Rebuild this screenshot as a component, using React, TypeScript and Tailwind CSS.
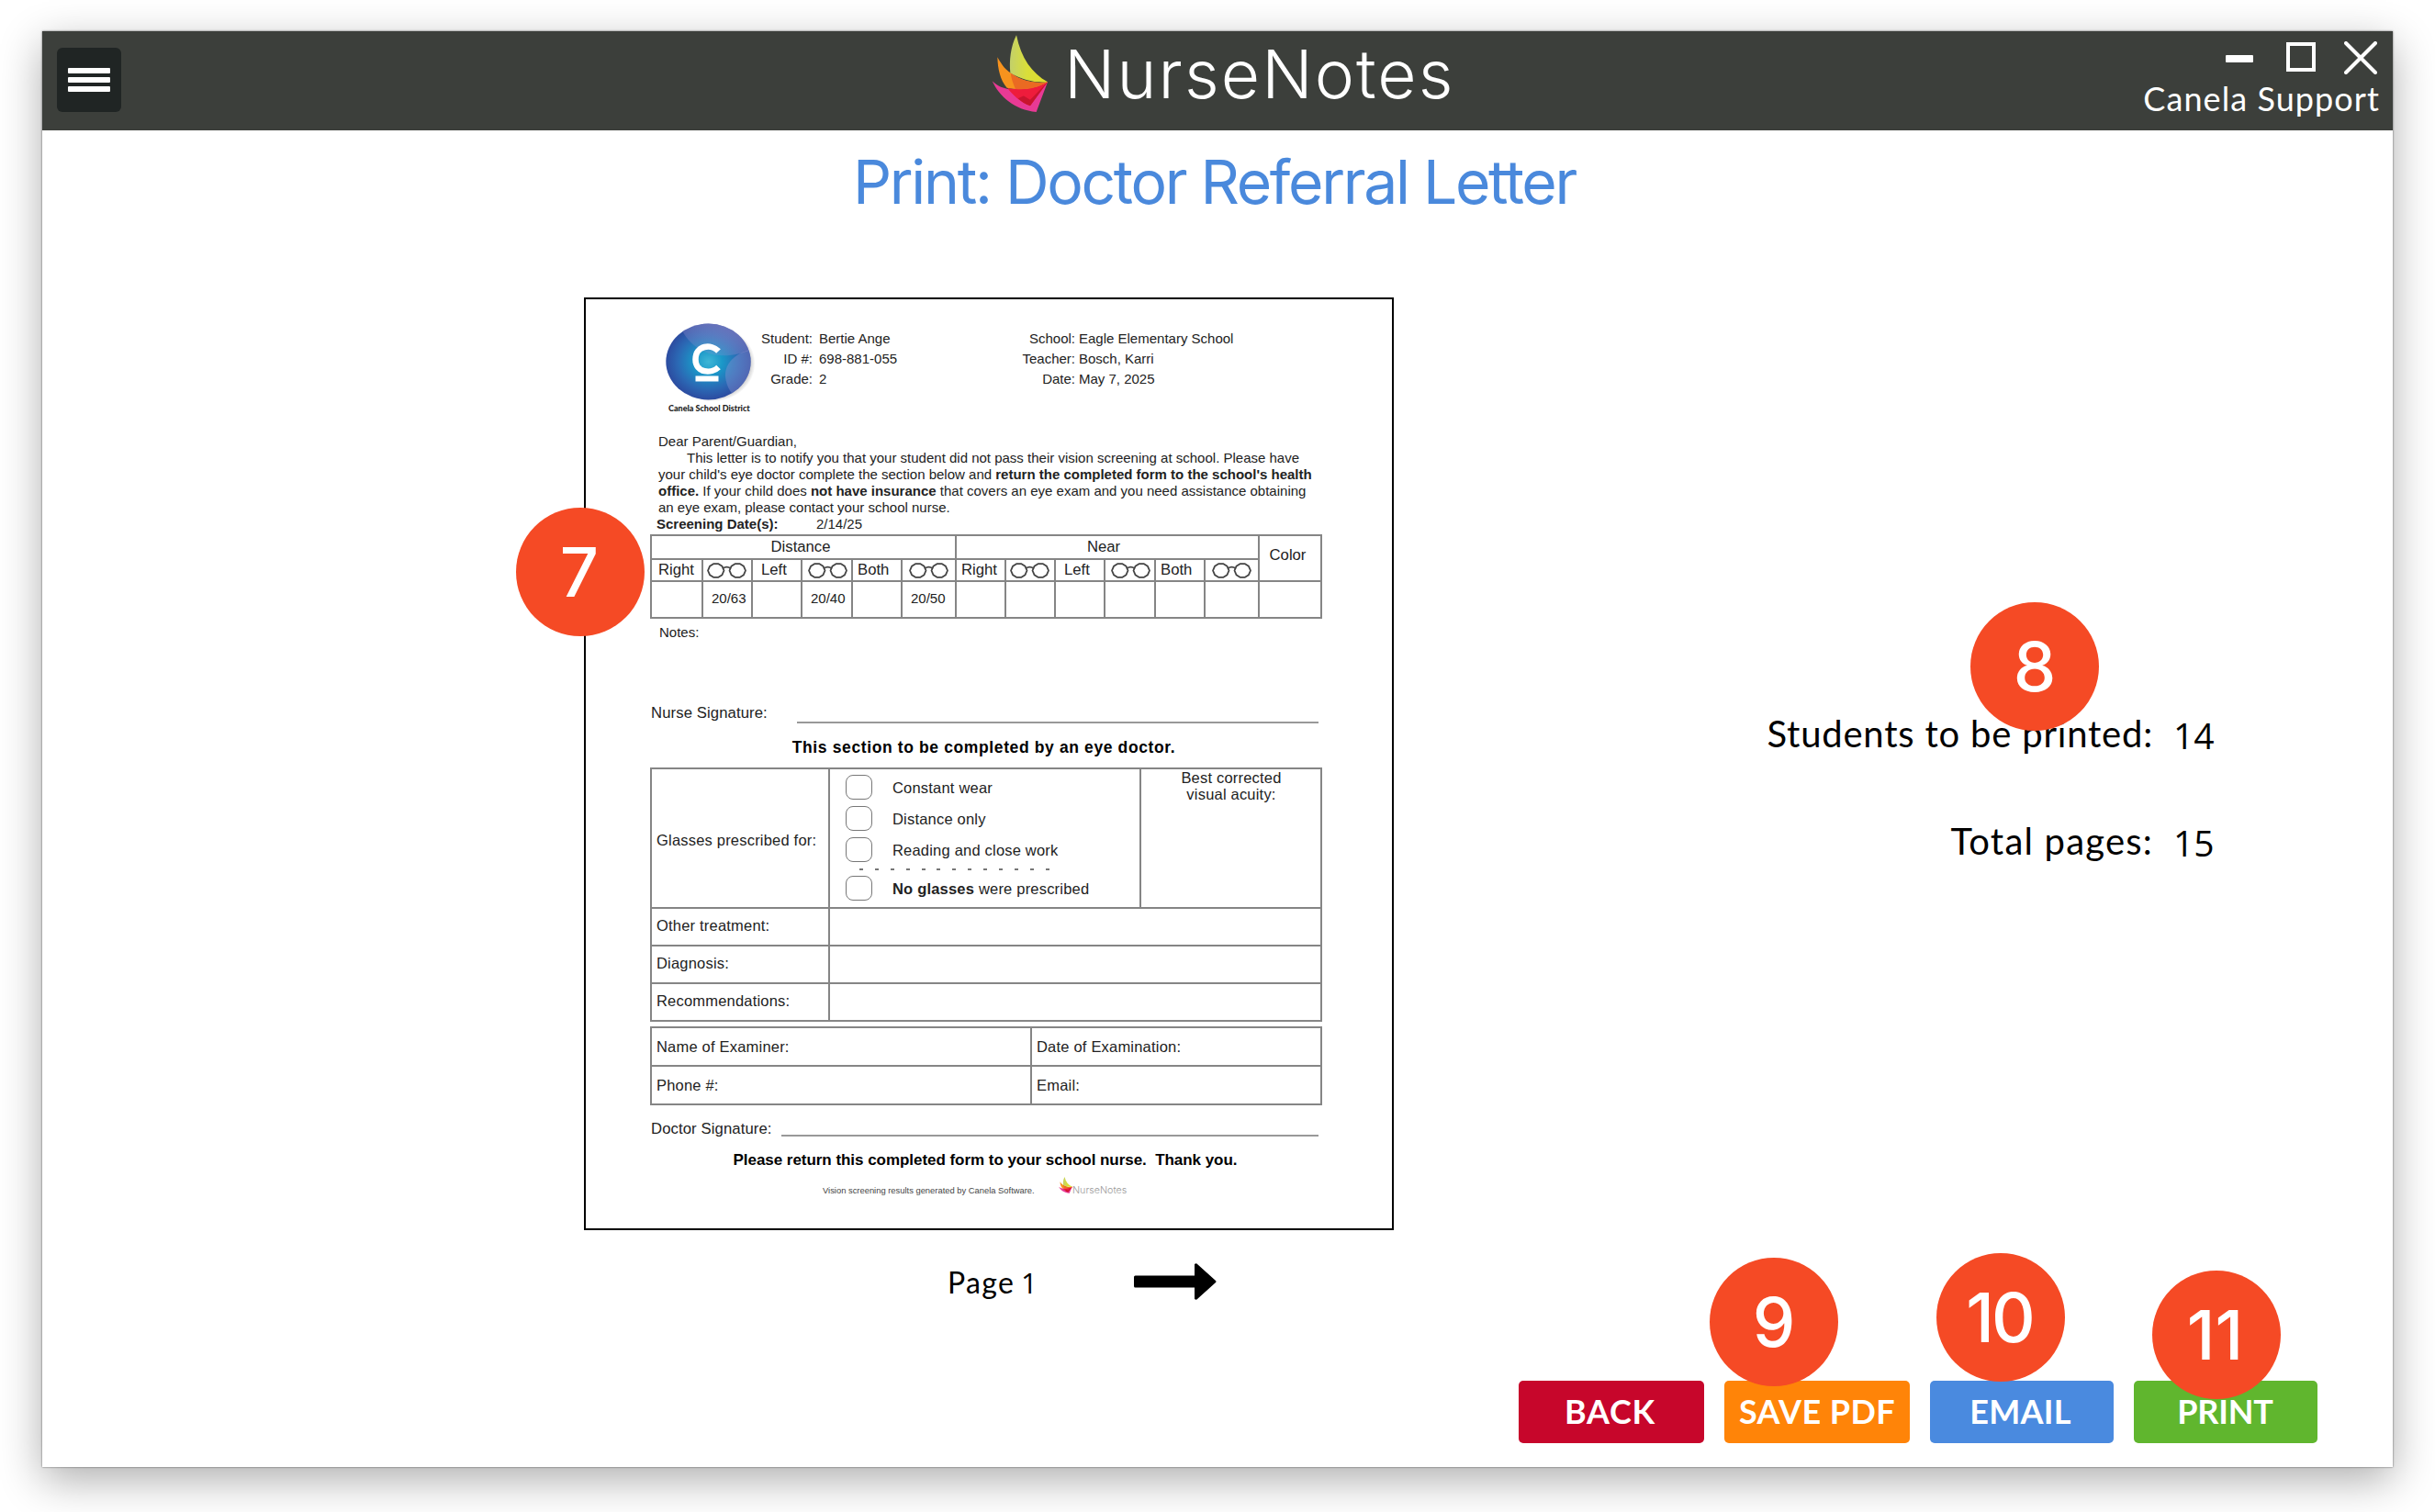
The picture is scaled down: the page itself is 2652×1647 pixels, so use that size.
import React from 'react';
import clsx from 'clsx';

const LINE = 'border-[#858585]';

function Flame({ className, id }: { className: string; id: string }) {
  return (
    <svg viewBox="60 24 186 255" preserveAspectRatio="none" className={className} aria-hidden="true">
      <defs>
        <linearGradient id={id} x1="0" x2="1" y1="0" y2="0">
          <stop offset="0" stopColor="#c3d06a" />
          <stop offset="0.45" stopColor="#d9de3a" />
          <stop offset="1" stopColor="#e0dc2c" />
        </linearGradient>
      </defs>
      <path d="M62 175C80 192 100 200 120 202L243 178L206 276C135 270 85 225 62 175Z" fill="#e83a95" />
      <path d="M112 198C160 206 205 198 243 178L186 256C155 244 130 222 112 198Z" fill="#ee1c3c" />
      <path d="M146 232L184 214L243 178L186 256C170 250 158 243 146 232Z" fill="#c8142e" />
      <path d="M141 205C175 206 210 198 243 178L186 236C170 228 152 216 141 205Z" fill="#ee1c3c" />
      <path d="M79 97C95 126 108 140 122 148C160 178 205 184 243 178C205 200 160 206 110 197C88 172 80 135 79 97Z" fill="#f7931e" />
      <path d="M122 148C160 178 205 184 243 178C210 198 175 204 138 201C130 184 124 166 122 148Z" fill="#ea6a22" />
      <path d="M141 25C156 100 192 150 243 178C205 182 160 172 121 148C117 108 122 62 141 25Z" fill={`url(#${id})`} />
    </svg>
  );
}

function Glasses() {
  return (
    <svg viewBox="0 0 43 17" className="h-[17px] w-[43px]" fill="none" stroke="#444" strokeWidth="1.8" strokeLinejoin="round">
      <path d="M7 1.2H12.500L16.500 3.800L18.500 8.500L16.500 13.200L12.500 15.800H7L3 13.200L1 8.500L3 3.800Z" />
      <path d="M30.500 1.2H36L40 3.800L42 8.500L40 13.200L36 15.800H30.500L26.500 13.200L24.500 8.500L26.500 3.800Z" />
      <path d="M17.300 6Q21.500 3.200 25.700 6" />
    </svg>
  );
}

function DistrictSeal() {
  return (
    <svg viewBox="0 0 100 86" className="h-[86px] w-[100px]" aria-hidden="true">
      <defs>
        <radialGradient id="seal" cx="0.5" cy="0.5" r="0.52">
          <stop offset="0" stopColor="#3fb6d6" />
          <stop offset="0.32" stopColor="#1a97c8" />
          <stop offset="0.7" stopColor="#2b68b4" />
          <stop offset="1" stopColor="#2c479d" />
        </radialGradient>
        <radialGradient id="sealShade" cx="0.5" cy="0.5" r="0.5">
          <stop offset="0.85" stopColor="#9a9a9a" stopOpacity="0.6" />
          <stop offset="1" stopColor="#9a9a9a" stopOpacity="0" />
        </radialGradient>
        <linearGradient id="sealGloss" x1="1" x2="0.2" y1="0" y2="1">
          <stop offset="0" stopColor="#9a94d2" stopOpacity="0.7" />
          <stop offset="1" stopColor="#9a94d2" stopOpacity="0.15" />
        </linearGradient>
        <clipPath id="sealClip">
          <ellipse cx="46.5" cy="42" rx="46.2" ry="41.4" />
        </clipPath>
      </defs>
      <ellipse cx="50.5" cy="44" rx="47" ry="41.5" fill="url(#sealShade)" />
      <ellipse cx="46.5" cy="42" rx="46.2" ry="41.4" fill="url(#seal)" />
      <g clipPath="url(#sealClip)">
        <path d="M18 8C26 24 42 34 58 35C72 36 84 33 95 28V-2H18Z" fill="url(#sealGloss)" />
        <path d="M95 28C76 32 64 44 65 58C66 70 72 78 80 84L98 60Z" fill="#8a94d2" fillOpacity="0.4" />
      </g>
      <path d="M57.500 30.500C50 22.500 32.500 23.500 32.500 39.500C32.500 54.500 50 55.500 57.500 48" fill="none" stroke="#fff" strokeWidth="6.500" />
      <rect x="32.500" y="57.500" width="25" height="6" fill="#fff" />
    </svg>
  );
}

function InfoTable({ rows, className }: { rows: [string, string][]; className: string }) {
  return (
    <dl className={clsx('grid content-start text-[15px] leading-[22px]', className)}>
      {rows.map(([label, value]) => (
        <React.Fragment key={label}>
          <dt className="text-right">{label}</dt>
          <dd>{value}</dd>
        </React.Fragment>
      ))}
    </dl>
  );
}

function Cell({ className, children }: { className?: string; children?: React.ReactNode }) {
  return <div className={clsx('flex items-center border-l-2 border-t-2', LINE, className)}>{children}</div>;
}

function AcuityHeads({ first }: { first: string }) {
  return (
    <>
      <Cell className={first}>Right</Cell>
      <Cell className="pl-[4px]"><Glasses /></Cell>
      <Cell className="pl-[9px]">Left</Cell>
      <Cell className="pl-[6px]"><Glasses /></Cell>
      <Cell className="pl-[5px]">Both</Cell>
      <Cell className="pl-[7px]"><Glasses /></Cell>
    </>
  );
}

// One entry per column: six for distance, six for near, one for color.
const RESULTS = ['', '20/63', '', '20/40', '', '20/50', '', '', '', '', '', '', ''];

function AcuityTable() {
  return (
    <div className={clsx('grid w-[732px] grid-cols-[56px_54px_54px_55px_54px_59px_54px_54px_54px_55px_54px_59px_68px] grid-rows-[26px_24px_40px] border-b-2 border-r-2 text-[16.7px] leading-none', LINE)}>
      <Cell className="col-span-6 justify-center pr-[6px]">Distance</Cell>
      <Cell className="col-span-6 justify-center pr-[8px]">Near</Cell>
      <Cell className="col-start-13 row-span-2 justify-center pb-[6px] pr-[5px]">Color</Cell>
      <AcuityHeads first="pl-[7px]" />
      <AcuityHeads first="pl-[5px]" />
      {RESULTS.map((value, i) => (
        <Cell key={i} className="pb-[4px] pl-[9px] text-[15px]">{value}</Cell>
      ))}
    </div>
  );
}

function Option({ className, children }: { className?: string; children: React.ReactNode }) {
  return (
    <div className={clsx('flex h-[27px] items-center gap-[22px]', className)}>
      <span className="h-[27px] w-[29px] rounded-[8px] border-[1.5px] border-[#777]" />
      <span className="whitespace-nowrap pt-[2px]">{children}</span>
    </div>
  );
}

function SignatureLine({ label, gap }: { label: string; gap: string }) {
  return (
    <div className="flex w-[728px] items-stretch">
      <span className="pl-px pt-px tracking-[0.1px]">{label}</span>
      <span className={clsx('flex-1 border-b-2 border-[#999]', gap)} />
    </div>
  );
}

function Letter() {
  return (
    <article className="flex h-[1016px] w-[882px] flex-col border-2 border-black bg-white pl-[70px] font-['Liberation_Sans',sans-serif] text-[#222]">
      <header className="flex h-[146px] pt-[26px]">
        <div className="ml-[17px] flex w-[100px] flex-col">
          <DistrictSeal />
          <p className="ml-[3px] mt-[1px] whitespace-nowrap font-['Lato',sans-serif] text-[9px] font-black leading-[11px] text-[#222]">Canela School District</p>
        </div>
        <InfoTable
          className="w-[285px] grid-cols-[60px_1fr] gap-x-[7px] pt-[6px]"
          rows={[['Student:', 'Bertie Ange'], ['ID #:', '698-881-055'], ['Grade:', '2']]}
        />
        <InfoTable
          className="w-[320px] grid-cols-[61px_1fr] gap-x-[4px] pt-[6px]"
          rows={[['School:', 'Eagle Elementary School'], ['Teacher:', 'Bosch, Karri'], ['Date:', 'May 7, 2025']]}
        />
      </header>

      <div className="h-[110px] whitespace-nowrap pl-[9px] text-[15px] leading-[17.9px]">
        <p>Dear Parent/Guardian,</p>
        <p className="pl-[31px]">This letter is to notify you that your student did not pass their vision screening at school. Please have</p>
        <p>your child's eye doctor complete the section below and <b>return the completed form to the school's health</b></p>
        <p><b>office.</b> If your child does <b>not have insurance</b> that covers an eye exam and you need assistance obtaining</p>
        <p>an eye exam, please contact your school nurse.</p>
        <p className="-ml-[2px] flex"><b className="w-[174px]">Screening Date(s):</b>2/14/25</p>
      </div>

      <AcuityTable />
      <p className="h-[92px] pl-[10px] text-[15px] leading-[30px]">Notes:</p>

      <div className="flex h-[22px] text-[16.7px] leading-[20px]">
        <SignatureLine label="Nurse Signature:" gap="ml-[32px]" />
      </div>
      <h2 className="mt-4 w-[727px] whitespace-nowrap text-center text-[17.5px] font-bold leading-[20px] tracking-[0.62px] text-black">This section to be completed by an eye doctor.</h2>

      <div className={clsx('mt-3 grid w-[732px] grid-cols-[194px_339px_197px] grid-rows-[152px_41px_41px_41px] border-b-2 border-r-2 text-[16.5px] leading-[17.7px] tracking-[0.2px]', LINE)}>
        <Cell className="whitespace-nowrap pl-[5px] pt-[5px]">Glasses prescribed for:</Cell>
        <Cell className="flex-col !items-stretch pl-[17px] pt-[6px]">
          <Option>Constant wear</Option>
          <Option className="mt-[7px]">Distance only</Option>
          <Option className="mt-[7px]">Reading and close work</Option>
          <div className="ml-[15px] mt-[7px] flex h-[2px] gap-[12.9px]">
            {Array.from({ length: 13 }, (_, i) => <span key={i} className="h-[2px] w-[4px] bg-[#777]" />)}
          </div>
          <Option className="mt-[6px]"><b>No glasses</b> were prescribed</Option>
        </Cell>
        <Cell className="!items-start justify-center pl-px pt-[1px] text-center">Best corrected<br />visual acuity:</Cell>
        {['Other treatment:', 'Diagnosis:', 'Recommendations:'].map((label) => (
          <React.Fragment key={label}>
            <Cell className="pb-px pl-[5px]">{label}</Cell>
            <Cell className="col-span-2" />
          </React.Fragment>
        ))}
      </div>

      <div className={clsx('mt-[5px] grid w-[732px] grid-cols-[414px_316px] grid-rows-[42px_42px] border-b-2 border-r-2 text-[16.5px] tracking-[0.2px]', LINE)}>
        {['Name of Examiner:', 'Date of Examination:', 'Phone #:', 'Email:'].map((label) => (
          <Cell key={label} className="pl-[5px]">{label}</Cell>
        ))}
      </div>

      <div className="mt-[14px] flex h-[20px] text-[16.7px] leading-[22px]">
        <SignatureLine label="Doctor Signature:" gap="ml-[10px]" />
      </div>
      <p className="mt-[16px] w-[730px] whitespace-pre text-center text-[17px] font-bold leading-[20px] tracking-[-0.04px] text-black">Please return this completed form to your school nurse.  Thank you.</p>
      <div className="mt-[8px] flex h-[20px] items-start pl-[188px]">
        <span className="w-[257px] whitespace-nowrap pt-[8px] text-[9.4px] leading-[13px] text-[#444]">Vision screening results generated by Canela Software.</span>
        <Flame id="flameSmall" className="h-[18px] w-[15px]" />
        <span className="pt-[8px] font-['Inter',sans-serif] text-[10.7px] font-light leading-[14px] text-[#999]">NurseNotes</span>
      </div>
    </article>
  );
}

function Badge({ className, children }: { className: string; children: React.ReactNode }) {
  return (
    <span className={clsx("absolute flex size-[140px] items-center justify-center rounded-full bg-[#f54a25] font-['Inter',sans-serif] text-[74px] font-medium leading-none text-white", className)}>
      {children}
    </span>
  );
}

const BUTTONS: [string, string][] = [
  ['BACK', 'w-[202px] bg-[#c7062b] pr-[3px] tracking-[0.7px]'],
  ['SAVE PDF', 'w-[202px] bg-[#ff8408] tracking-[0.43px]'],
  ['EMAIL', 'w-[200px] bg-[#4a8adf] pr-[3px] tracking-[0.28px]'],
  ['PRINT', 'w-[200px] bg-[#60b62e] pr-px tracking-[-0.17px]'],
];

function TitleBar() {
  return (
    <header className="flex h-[108px] bg-[#3c3f3b] pl-[16px]">
      <button className="mt-[18px] flex size-[70px] flex-col items-center justify-center gap-[4px] rounded-[6px] bg-[#202524]">
        <span className="h-[6px] w-[46px] rounded-[1px] bg-white" />
        <span className="h-[6px] w-[46px] rounded-[1px] bg-white" />
        <span className="h-[6px] w-[46px] rounded-[1px] bg-white" />
      </button>
      <div className="ml-[948px] flex">
        <Flame id="flame" className="mt-[4px] h-[85px] w-[62px]" />
        <span className="ml-[17px] mt-[2px] font-['Inter',sans-serif] text-[73px] font-light leading-[90px] tracking-[2.1px] text-white">NurseNotes</span>
      </div>
      <div className="ml-auto flex flex-col items-end pt-[11px] text-white">
        <div className="flex h-[36px] items-start pr-[17px]">
          <span className="mr-[36px] mt-[15px] h-[8px] w-[30px] rounded-[1px] bg-white" />
          <span className="mr-[31px] mt-px size-[32px] border-4 border-white" />
          <svg viewBox="0 0 36 36" className="size-[36px]" stroke="#fff" strokeWidth="4" strokeLinecap="round">
            <path d="M2 2L34 34M34 2L2 34" />
          </svg>
        </div>
        <span className="mt-[6px] pr-[14px] font-['Lato',sans-serif] text-[36px] leading-[40px] tracking-[1.07px]">Canela Support</span>
      </div>
    </header>
  );
}

export default function App() {
  return (
    <div className="h-[1647px] w-[2652px] overflow-hidden bg-white px-[46px] pt-[34px]">
      <div className="relative flex h-[1564px] w-[2560px] flex-col bg-white shadow-[0_0_2px_rgba(0,0,0,0.6),0_14px_44px_rgba(0,0,0,0.32)]">
        <TitleBar />
        <h1 className="h-[112px] pr-[7px] text-center font-['Inter',sans-serif] text-[66px] leading-[113px] tracking-[-2.32px] text-[#4a89dc]">Print: Doctor Referral Letter</h1>

        <main className="flex flex-1 text-black">
          <section className="w-[1472px] pl-[590px] pt-[70px]">
            <Letter />
            <div className="mt-[36px] flex h-[40px] items-center pl-[396px]">
              <span className="pt-px font-['Lato',sans-serif] text-[32px] leading-[40px] tracking-[1.3px]">Page</span>
              <span className="ml-[7px] pt-px font-['Open_Sans',sans-serif] text-[31px] leading-[40px]">1</span>
              <svg viewBox="0 0 90 40" className="ml-auto mr-[193px] h-[40px] w-[90px]">
                <path d="M1.500 13.500H66V1Q68 -0.500 69 1L89 19Q90 20 89 21L69 39Q68 40.500 66 39V26.500H1.500Q0 26.500 0 25V15Q0 13.500 1.500 13.500Z" />
              </svg>
            </div>
          </section>

          <section className="flex flex-1 flex-col justify-between pb-[26px] pr-[82px]">
            <dl className="ml-auto mr-[109px] mt-[525px] grid grid-cols-[auto_48px] gap-x-[22px] gap-y-[75px] font-['Lato',sans-serif] text-[40px] leading-[40px]">
              <dt className="text-right tracking-[0.8px]">Students to be printed:</dt>
              <dd className="pt-[2px] font-['Open_Sans',sans-serif] text-[39px]">14</dd>
              <dt className="text-right tracking-[1.2px]">Total pages:</dt>
              <dd className="pt-[2px] font-['Open_Sans',sans-serif] text-[39px]">15</dd>
            </dl>
            <div className="flex justify-end gap-[22px]">
              {BUTTONS.map(([label, look]) => (
                <button key={label} className={clsx("h-[68px] whitespace-nowrap rounded-[5px] pb-[3px] font-['Lato',sans-serif] text-[36px] font-bold leading-[40px] text-white", look)}>
                  {label}
                </button>
              ))}
            </div>
          </section>
        </main>

        <Badge className="left-[516px] top-[519px] pr-[2px]">7</Badge>
        <Badge className="left-[2100px] top-[622px]">8</Badge>
        <Badge className="left-[1816px] top-[1336px]">9</Badge>
        <Badge className="left-[2063px] top-[1331px] pr-[3px] tracking-[-3px]">10</Badge>
        <Badge className="left-[2298px] top-[1350px] pr-[3px]">11</Badge>
      </div>
    </div>
  );
}
